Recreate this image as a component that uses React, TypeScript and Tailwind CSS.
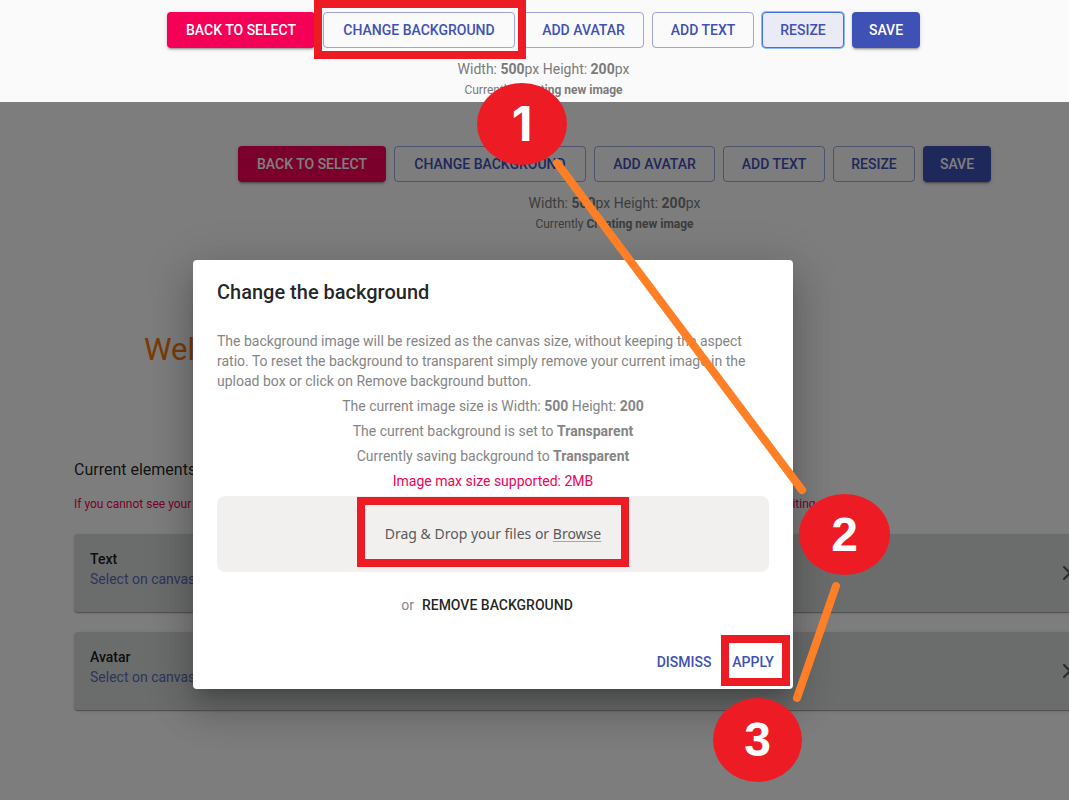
import React from "react";
import { X } from "lucide-react";

const outlined =
  "h-9 rounded border text-sm font-medium text-[#3f51b5] whitespace-nowrap shrink-0";
const contained =
  "h-9 rounded text-sm font-medium text-white whitespace-nowrap shrink-0 shadow-[0_3px_1px_-2px_rgba(0,0,0,0.2),0_2px_2px_0_rgba(0,0,0,0.14),0_1px_5px_0_rgba(0,0,0,0.12)]";
const idle = "border-[#3f51b5]/50";
const focused = "border-[#4671dd] bg-[#ebebf5] ring-1 ring-[#8fb8fa]";

function Highlight({ className }: { className: string }) {
  return (
    <span
      aria-hidden="true"
      className={`pointer-events-none absolute z-10 border-8 border-[#ed1c24] ${className}`}
    />
  );
}

function Toolbar({ guided = false }: { guided?: boolean }) {
  return (
    <div className="flex flex-col items-center">
      <div className="flex justify-center gap-2">
        <button className={`${contained} w-[148px] bg-[#f50057]`}>BACK TO SELECT</button>
        <div className="relative shrink-0">
          <button className={`${outlined} ${idle} w-48`}>CHANGE BACKGROUND</button>
          {guided && <Highlight className="-top-3 -right-[11px] -bottom-[11px] -left-[9px]" />}
        </div>
        <button className={`${outlined} ${idle} w-[121px]`}>ADD AVATAR</button>
        <button className={`${outlined} ${idle} w-[102px]`}>ADD TEXT</button>
        <button className={`${outlined} ${guided ? focused : idle} w-[82px]`}>RESIZE</button>
        <button className={`${contained} w-[68px] bg-[#3f51b5]`}>SAVE</button>
      </div>
      <p className="mt-[11px] text-sm leading-5 text-[#7a7a7a]">
        Width: <b>500</b>px Height: <b>200</b>px
      </p>
      <p className="text-xs leading-[22px] text-[#7a7a7a]">
        Currently <b>Creating new image</b>
      </p>
    </div>
  );
}

function ElementCard({ title }: { title: string }) {
  return (
    <li className="flex h-[78px] items-center justify-between rounded bg-[#d6dbd9] pr-[73px] pl-4 shadow-[0_2px_1px_-1px_rgba(0,0,0,0.2),0_1px_1px_0_rgba(0,0,0,0.14),0_1px_3px_0_rgba(0,0,0,0.12)]">
      <div className="pb-2 text-sm leading-5">
        <h3 className="font-medium text-black/90">{title}</h3>
        <a href="#canvas" className="text-[#5e68b8]">
          Select on canvas
        </a>
      </div>
      <button aria-label={`Remove ${title}`}>
        <X className="size-6 text-[#555]" />
      </button>
    </li>
  );
}

function BackgroundDialog() {
  return (
    <div
      role="dialog"
      aria-modal="true"
      aria-labelledby="dialog-title"
      className="w-[600px] rounded bg-white shadow-[0_11px_15px_-7px_rgba(0,0,0,0.2),0_24px_38px_3px_rgba(0,0,0,0.14),0_9px_46px_8px_rgba(0,0,0,0.12)]"
    >
      <h2 id="dialog-title" className="px-6 py-4 text-xl leading-8 font-medium text-black/87">
        Change the background
      </h2>
      <div className="px-6 pt-[7px] text-sm leading-5 text-[#858585]">
        <p>
          The background image will be resized as the canvas size, without keeping the aspect ratio.
          To reset the background to transparent simply remove your current image in the upload box
          or click on Remove background button.
        </p>
        <div className="mt-[5px] flex flex-col items-center gap-[5px]">
          <p>
            The current image size is Width: <b>500</b> Height: <b>200</b>
          </p>
          <p>
            The current background is set to <b>Transparent</b>
          </p>
          <p>
            Currently saving background to <b>Transparent</b>
          </p>
          <p className="text-[#f50057]">Image max size supported: 2MB</p>
        </div>
        <div className="mt-[5px] flex h-[76px] items-center justify-center rounded-lg bg-[#f1f0ef]">
          <div className="relative px-7 py-[25px] font-['Noto_Sans',sans-serif] text-[#5a5a5a]">
            Drag &amp; Drop your files or{" "}
            <button className="underline decoration-[#a5a5a5] underline-offset-2">Browse</button>
            <Highlight className="inset-x-0 -top-0.5 bottom-0.5" />
          </div>
        </div>
        <div className="mt-[15px] flex h-9 items-center justify-center pr-1">
          <span>or</span>
          <button className="h-9 px-2 font-medium text-black/87">REMOVE BACKGROUND</button>
        </div>
      </div>
      <div className="mt-[13px] flex justify-end gap-1 px-2 pt-2 pb-[9px] text-sm font-medium text-[#3f51b5]">
        <button className="h-9 w-[66px]">DISMISS</button>
        <div className="relative">
          <button className="h-9 w-16">APPLY</button>
          <Highlight className="-top-[9px] -right-[5px] -bottom-1.5 left-0" />
        </div>
      </div>
    </div>
  );
}

function Step({ n, className }: { n: number; className: string }) {
  return (
    <span
      className={`absolute z-30 flex items-center justify-center rounded-[50%] bg-[#ed1c24] text-5xl font-bold text-white ${className}`}
    >
      {n}
    </span>
  );
}

export default function App() {
  return (
    <div className="relative flex min-h-screen flex-col overflow-hidden bg-[#fafafa] font-[Roboto,sans-serif]">
      <header className="h-[102px] pt-3 pl-[18px]">
        <Toolbar guided />
      </header>

      <main className="relative flex-1 overflow-hidden">
        <div className="mr-[-86px] ml-[74px] pt-11">
          <Toolbar />
          <div
            id="canvas"
            className="px-[70px] pt-[90px] pb-[83px] text-[31px] leading-[50px] text-[#f5760a]"
          >
            Welcome
          </div>
          <h2 className="leading-6 text-black/87">Current elements</h2>
          <p className="mt-3 text-xs leading-5 text-[#f50057]">
            If you cannot see your elements on the canvas, please select one of the elements from the
            list below and click on the canvas to start editing
          </p>
          <ul className="mt-5 flex flex-col gap-5">
            <ElementCard title="Text" />
            <ElementCard title="Avatar" />
          </ul>
        </div>
        <div className="absolute inset-0 flex items-start justify-center bg-black/50 pt-[158px] pr-[83px]">
          <BackgroundDialog />
        </div>
      </main>

      <svg
        aria-hidden="true"
        className="pointer-events-none absolute top-0 left-0 z-20 h-[800px] w-[1069px]"
        viewBox="0 0 1069 800"
        fill="none"
        stroke="#ff7f27"
        strokeWidth="8"
        strokeLinecap="round"
      >
        <path d="M557 163 802 490M836 586 797 698" />
      </svg>
      <Step n={1} className="top-[83px] left-[477px] h-[82px] w-[90px] font-[Inter,sans-serif]" />
      <Step
        n={2}
        className="top-[494px] left-[799px] h-[81px] w-[91px] font-['Liberation_Sans',sans-serif]"
      />
      <Step
        n={3}
        className="top-[698px] left-[713px] h-[84px] w-[89px] font-['Liberation_Sans',sans-serif]"
      />
    </div>
  );
}
